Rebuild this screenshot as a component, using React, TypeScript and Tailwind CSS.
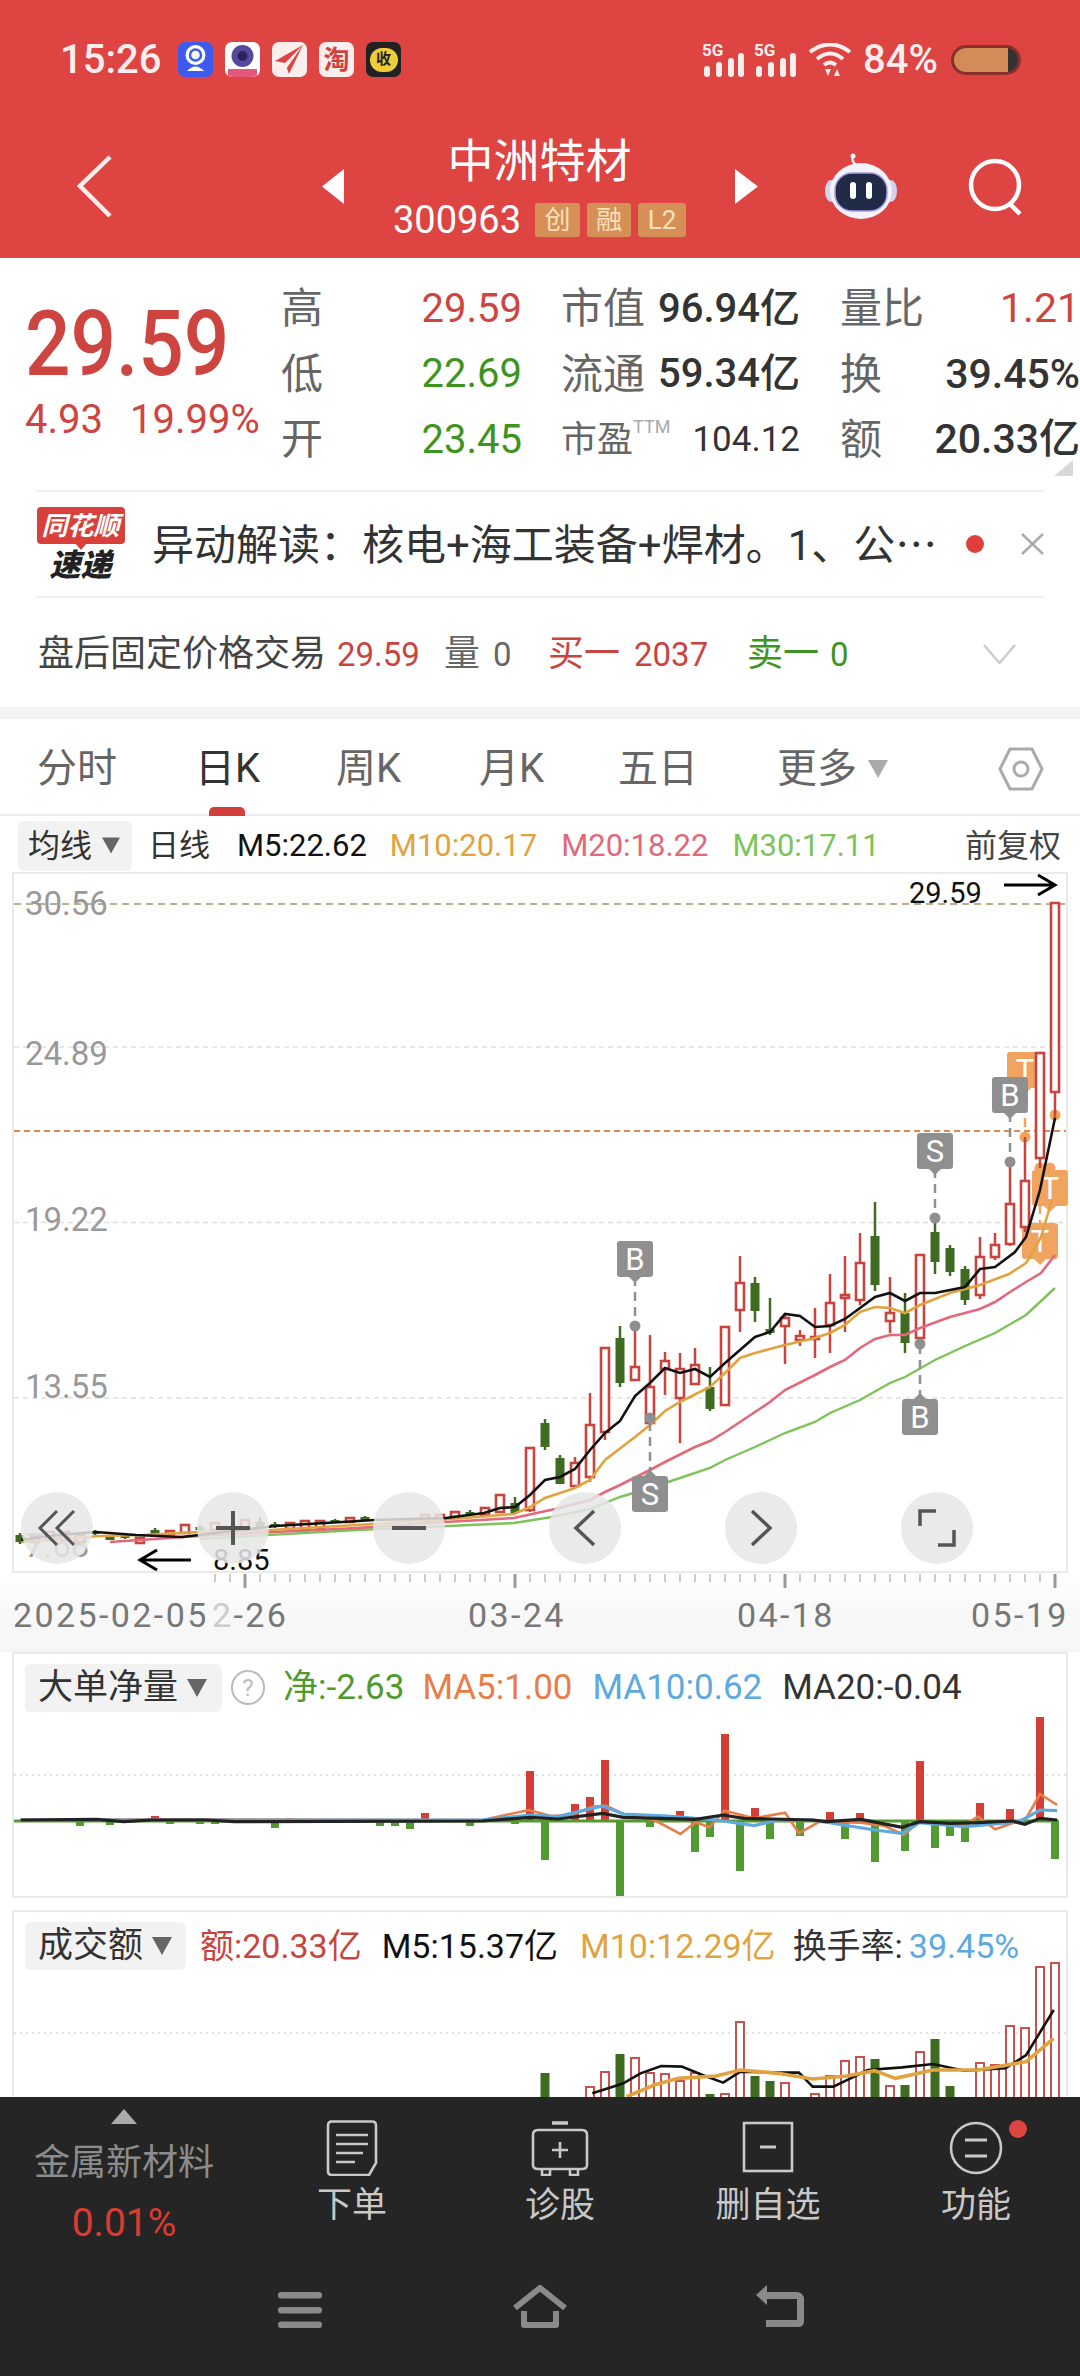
// Stock detail page: quote header, daily K chart and indicator panels
type Candle = [number, number, number, number, number, "r" | "g"];

const RED = "#c9443f";
const DARK_GREEN = "#3f6a22";

// x, high, body top, body bottom, low, colour
const candles: Candle[] = [
  [1055, 903, 903, 1092, 1118, "r"],
  [1040, 1053, 1053, 1158, 1168, "r"],
  [1025, 1137, 1181, 1227, 1232, "r"],
  [1010, 1162, 1204, 1244, 1246, "r"],
  [995, 1233, 1245, 1257, 1260, "r"],
  [980, 1237, 1257, 1295, 1299, "r"],
  [965, 1266, 1269, 1300, 1305, "g"],
  [950, 1245, 1248, 1272, 1276, "g"],
  [935, 1218, 1232, 1262, 1274, "g"],
  [920, 1254, 1255, 1338, 1345, "r"],
  [905, 1293, 1313, 1343, 1353, "g"],
  [890, 1277, 1313, 1321, 1333, "r"],
  [875, 1202, 1236, 1285, 1291, "g"],
  [860, 1233, 1263, 1300, 1305, "r"],
  [845, 1256, 1295, 1298, 1332, "r"],
  [830, 1274, 1303, 1325, 1353, "r"],
  [815, 1308, 1337, 1339, 1358, "r"],
  [800, 1330, 1336, 1340, 1346, "r"],
  [785, 1313, 1318, 1326, 1364, "r"],
  [770, 1298, 1329, 1333, 1335, "g"],
  [755, 1277, 1283, 1311, 1322, "g"],
  [740, 1256, 1283, 1310, 1332, "r"],
  [725, 1327, 1327, 1405, 1405, "r"],
  [710, 1367, 1387, 1409, 1411, "g"],
  [695, 1348, 1365, 1384, 1384, "r"],
  [680, 1353, 1369, 1398, 1443, "r"],
  [665, 1352, 1361, 1369, 1395, "r"],
  [650, 1335, 1387, 1423, 1425, "r"],
  [635, 1326, 1367, 1380, 1380, "r"],
  [620, 1326, 1338, 1383, 1387, "g"],
  [605, 1348, 1348, 1432, 1440, "r"],
  [590, 1393, 1425, 1477, 1482, "r"],
  [575, 1457, 1463, 1486, 1488, "r"],
  [560, 1455, 1458, 1484, 1484, "g"],
  [545, 1419, 1423, 1447, 1450, "g"],
  [530, 1448, 1448, 1510, 1512, "r"],
  [515, 1497, 1503, 1513, 1513, "g"],
  [500, 1495, 1495, 1512, 1512, "r"],
  [485, 1508, 1508, 1515, 1515, "r"],
  [470, 1510, 1512, 1515, 1516, "g"],
  [455, 1512, 1512, 1517, 1517, "r"],
  [440, 1515, 1515, 1520, 1520, "r"],
  [425, 1515, 1515, 1522, 1522, "r"],
  [410, 1517, 1518, 1522, 1524, "g"],
  [365, 1516, 1517, 1520, 1520, "g"],
  [350, 1518, 1518, 1522, 1522, "r"],
  [335, 1519, 1520, 1523, 1523, "g"],
  [320, 1521, 1521, 1528, 1528, "r"],
  [305, 1521, 1521, 1530, 1530, "r"],
  [290, 1523, 1523, 1529, 1529, "r"],
  [275, 1522, 1524, 1526, 1528, "g"],
  [260, 1517, 1522, 1527, 1528, "g"],
  [245, 1520, 1520, 1530, 1530, "r"],
  [215, 1523, 1523, 1530, 1530, "r"],
  [200, 1525, 1527, 1530, 1531, "g"],
  [185, 1525, 1525, 1533, 1533, "r"],
  [170, 1531, 1531, 1534, 1534, "r"],
  [155, 1528, 1530, 1534, 1535, "g"],
  [140, 1538, 1538, 1543, 1543, "r"],
  [125, 1535, 1536, 1538, 1539, "g"],
  [110, 1535, 1536, 1540, 1540, "g"],
  [95, 1530, 1532, 1534, 1535, "g"],
  [80, 1535, 1535, 1542, 1542, "r"],
  [65, 1532, 1532, 1540, 1540, "r"],
  [50, 1532, 1532, 1540, 1540, "r"],
  [35, 1536, 1536, 1542, 1542, "r"],
  [20, 1533, 1535, 1542, 1544, "g"],
];

const m5 = "21,1540 57,1535 96,1532 136,1535 182,1537 275,1526 375,1520 446,1518 484,1513 500,1508 515,1507 530,1495 545,1480 560,1477 575,1469 590,1450 605,1433 620,1421 635,1396 650,1383 665,1368 680,1373 695,1369 710,1377 725,1363 740,1350 755,1337 770,1332 785,1314 800,1316 815,1327 830,1326 845,1319 860,1308 875,1297 890,1293 905,1301 920,1293 935,1293 965,1287 980,1269 995,1267 1015,1252 1026,1237 1040,1190 1055,1118";
const m10 = "21,1542 100,1536 143,1535 200,1532 271,1530 357,1525 464,1518 514,1514 530,1507 545,1498 560,1493 575,1488 590,1480 605,1460 635,1437 650,1425 665,1411 680,1402 710,1387 725,1373 740,1358 755,1353 785,1345 815,1338 830,1333 845,1325 860,1312 875,1307 890,1308 905,1313 920,1305 950,1293 980,1285 1009,1274 1026,1263 1030,1257 1041,1237 1052,1200";
const m20 = "110,1542 214,1535 357,1528 446,1522 514,1518 555,1509 590,1500 605,1492 620,1485 650,1470 665,1462 695,1447 710,1441 725,1432 740,1422 755,1412 770,1402 785,1390 815,1375 830,1367 845,1360 860,1348 875,1339 890,1335 905,1335 920,1328 950,1317 965,1313 980,1309 995,1302 1010,1292 1026,1282 1041,1273 1055,1255";
const m30 = "200,1539 357,1530 514,1523 552,1517 590,1509 620,1497 650,1488 680,1478 710,1468 725,1460 755,1447 785,1433 815,1422 830,1413 860,1400 890,1383 905,1377 935,1360 965,1346 995,1333 1026,1315 1055,1288";

// net flow bars: x, y of the free end (above or below the zero line)
const flowUp = [[1040, 1717], [1010, 1809], [980, 1803], [920, 1761], [860, 1813], [830, 1812], [755, 1808], [725, 1734], [680, 1811], [605, 1760], [590, 1797], [575, 1804], [530, 1771], [500, 1816], [425, 1813], [290, 1818], [155, 1816]];
const flowDown = [[1055, 1859], [965, 1842], [950, 1836], [935, 1848], [905, 1851], [875, 1862], [845, 1839], [800, 1836], [770, 1839], [740, 1871], [710, 1837], [695, 1852], [650, 1827], [620, 1897], [545, 1860], [515, 1824], [470, 1826], [410, 1829], [395, 1826], [380, 1826], [275, 1828], [215, 1824], [200, 1824], [170, 1824], [110, 1825], [80, 1826]];

const toPoints = (pts: number[][]) => pts.map(([x, y]) => `${x / 1.452},${1640 + y / 3}`).join(" ");
const flowBlack = toPoints([[30, 540], [140, 538], [180, 545], [220, 540], [300, 540], [340, 545], [700, 543], [770, 532], [810, 537], [875, 520], [905, 532], [1010, 538], [1050, 525], [1080, 535], [1180, 540], [1200, 545], [1250, 538], [1310, 562], [1335, 545], [1380, 550], [1420, 548], [1470, 543], [1488, 553], [1510, 535], [1535, 540]]);
const flowBlue = toPoints([[30, 540], [700, 540], [770, 525], [810, 530], [875, 498], [905, 522], [970, 528], [1040, 540], [1095, 557], [1130, 540], [1180, 540], [1270, 570], [1310, 580], [1335, 548], [1400, 560], [1480, 545], [1510, 510], [1535, 512]]);
const flowOrange = toPoints([[30, 540], [240, 538], [700, 540], [768, 510], [800, 528], [830, 525], [860, 500], [880, 497], [905, 522], [950, 540], [988, 582], [1010, 547], [1030, 562], [1052, 512], [1095, 535], [1140, 518], [1160, 580], [1190, 545], [1250, 548], [1285, 558], [1312, 585], [1335, 545], [1400, 555], [1420, 530], [1445, 568], [1490, 535], [1510, 462], [1535, 495]]);

// turnover bars: x, top, hollow red or solid green
const turnover: [number, number, "r" | "g"][] = [[1055, 1963, "r"], [1040, 1967, "r"], [1025, 2028, "r"], [1010, 2026, "r"], [995, 2065, "r"], [980, 2063, "r"], [950, 2086, "g"], [935, 2039, "g"], [920, 2052, "r"], [905, 2085, "g"], [890, 2086, "r"], [875, 2059, "g"], [860, 2057, "r"], [845, 2061, "r"], [830, 2076, "r"], [815, 2094, "r"], [785, 2083, "r"], [770, 2081, "g"], [755, 2076, "g"], [740, 2022, "r"], [725, 2094, "r"], [710, 2094, "g"], [695, 2073, "r"], [680, 2081, "r"], [665, 2074, "r"], [650, 2073, "r"], [635, 2058, "r"], [620, 2054, "g"], [605, 2072, "r"], [590, 2087, "r"], [545, 2073, "g"]];
const turnM5 = toLine([[860, 550], [890, 530], [905, 520], [930, 490], [960, 468], [990, 470], [1020, 495], [1050, 518], [1075, 485], [1130, 488], [1160, 488], [1180, 530], [1210, 530], [1260, 480], [1310, 472], [1355, 462], [1400, 482], [1460, 475], [1490, 435], [1530, 300]]);
const turnM10 = toLine([[910, 560], [950, 525], [985, 505], [1040, 498], [1075, 480], [1130, 490], [1180, 507], [1230, 498], [1270, 482], [1300, 505], [1355, 480], [1420, 480], [1490, 455], [1530, 385]]);

function toLine(pts: number[][]) {
  return pts.map(([x, y]) => `${x / 1.452},${1910 + y / 3}`).join(" ");
}

function Tag({ x, y, label, color, dotY, tip = "down" }: { x: number; y: number; label: string; color: string; dotY: number; tip?: "up" | "down" }) {
  const stemFrom = tip === "down" ? y + 36 : y;
  return (
    <g>
      <line x1={x} y1={stemFrom} x2={x} y2={dotY} stroke={color} strokeWidth="2.5" strokeDasharray="9 6" />
      <circle cx={x} cy={dotY} r="5.5" fill={color} />
      <polygon points={tip === "down" ? `${x - 7},${y + 35} ${x + 7},${y + 35} ${x},${y + 42}` : `${x - 7},${y + 1} ${x + 7},${y + 1} ${x},${y - 6}`} fill={color} />
      <rect x={x - 18} y={y} width="36" height="36" rx="3" fill={color} />
      <text x={x} y={y + 29} textAnchor="middle" fontSize="31" fill="#fff">{label}</text>
    </g>
  );
}

function Caret({ className }: { className: string }) {
  return (
    <svg viewBox="0 0 20 18" className={className}>
      <polygon points="0,0 20,0 10,18" fill="currentColor" />
    </svg>
  );
}

function RoundButton({ children }: { children: React.ReactNode }) {
  return (
    <div className="flex h-[72px] w-[72px] items-center justify-center rounded-full bg-[#e6e6e6]/85">
      <svg viewBox="0 0 40 40" className="h-10 w-10" fill="none" stroke="#555" strokeWidth="3">
        {children}
      </svg>
    </div>
  );
}

function KChart() {
  return (
    <div className="relative ml-3 h-[701px] w-[1056px] border-2 border-[#eaeaea]">
      <svg viewBox="14 874 1052 697" className="block h-[697px] w-[1052px] overflow-visible">
        <line x1="14" x2="1066" y1="904" y2="904" stroke="#bcae8c" strokeWidth="2" strokeDasharray="7 5" />
        <line x1="14" x2="1066" y1="1047" y2="1047" stroke="#e0e0e0" strokeWidth="1.5" strokeDasharray="5 4" />
        <line x1="14" x2="1066" y1="1222.5" y2="1222.5" stroke="#e0e0e0" strokeWidth="1.5" strokeDasharray="5 4" />
        <line x1="14" x2="1066" y1="1398" y2="1398" stroke="#e0e0e0" strokeWidth="1.5" strokeDasharray="5 4" />
        <line x1="14" x2="1066" y1="1131" y2="1131" stroke="#dc8a55" strokeWidth="2" strokeDasharray="6 4" />
        <g fontSize="33" fill="#999">
          <text x="25" y="915">30.56</text>
          <text x="25" y="1065">24.89</text>
          <text x="25" y="1231">19.22</text>
          <text x="25" y="1398">13.55</text>
          <text x="25" y="1557">7.68</text>
        </g>
        <Tag x={1025} y={1052} label="T" color="#f0a460" dotY={1137} />
        <Tag x={1050} y={1170} label="T" color="#f0a460" dotY={1168} />
        <Tag x={1040} y={1223} label="T" color="#f0a460" dotY={1168} />
        <circle cx="1055" cy="1115" r="5.5" fill="#f0a460" />
        {candles.map(([x, hi, top, bot, lo, c]) => {
          const color = c === "r" ? RED : DARK_GREEN;
          return (
            <g key={x}>
              <line x1={x} x2={x} y1={hi} y2={lo} stroke={color} strokeWidth="2.5" />
              {c === "r" ? (
                <rect x={x - 4} y={top} width="8" height={bot - top} fill="#fff" stroke={color} strokeWidth="2.6" />
              ) : (
                <rect x={x - 4.5} y={top} width="9" height={bot - top} fill={color} />
              )}
            </g>
          );
        })}
        <polyline points={m30} fill="none" stroke="#7cc45a" strokeWidth="2.4" />
        <polyline points={m20} fill="none" stroke="#e2687a" strokeWidth="2.6" />
        <polyline points={m10} fill="none" stroke="#dfa33f" strokeWidth="2.6" />
        <polyline points={m5} fill="none" stroke="#111" strokeWidth="2.6" />
        <Tag x={635} y={1241} label="B" color="#8f8f8f" dotY={1326} />
        <Tag x={650} y={1476} label="S" color="#8f8f8f" dotY={1418} tip="up" />
        <Tag x={935} y={1133} label="S" color="#8f8f8f" dotY={1218} />
        <Tag x={920} y={1399} label="B" color="#8f8f8f" dotY={1344} tip="up" />
        <Tag x={1010} y={1077} label="B" color="#8f8f8f" dotY={1162} />
        <text x="909" y="903" fontSize="29" fill="#111">29.59</text>
        <g fill="none" stroke="#000" strokeWidth="3">
          <path d="M1004 885H1055M1038 875L1055 885L1038 895" />
          <path d="M191 1560H140M157 1550L140 1560L157 1570" />
        </g>
        <text x="213" y="1570" fontSize="29" fill="#111">8.85</text>
      </svg>
      {/* zoom and pan controls floating over the candles */}
      <div className="absolute bottom-[7px] left-[7px] flex gap-[104px]">
        <RoundButton><path d="M20 3L3 20L20 37M37 3L20 20L37 37" /></RoundButton>
        <RoundButton><path d="M20 3V37M3 20H37" strokeWidth="4" /></RoundButton>
        <RoundButton><path d="M3 20H37" strokeWidth="4" /></RoundButton>
        <RoundButton><path d="M29 3L11 20L29 37" strokeWidth="3.5" /></RoundButton>
        <RoundButton><path d="M11 3L29 20L11 37" strokeWidth="3.5" /></RoundButton>
        <RoundButton><path d="M19 3H3V18M21 37H37V22" strokeWidth="3.5" /></RoundButton>
      </div>
    </div>
  );
}

function DateAxis() {
  const ticks = [];
  for (let x = 215; x <= 1055; x += 15) ticks.push(x);
  return (
    <div className="h-[79px] bg-gradient-to-b from-white via-[#f8f8f8] to-[#f6f6f6]">
      <svg viewBox="0 1573 1080 79" className="block h-[79px] w-[1080px]">
        {ticks.map((x) => {
          const big = x === 245 || x === 515 || x === 785 || x === 1055;
          return <line key={x} x1={x} x2={x} y1="1574" y2={big ? 1588 : 1582} stroke={big ? "#999" : "#ccc"} strokeWidth={big ? 3 : 2} />;
        })}
        <g fontSize="34" fill="#777" letterSpacing="2.4">
          <text x="13" y="1627">2025-02-05</text>
          <text x="212" y="1627"><tspan fill="#ccc">2</tspan>-26</text>
          <text x="468" y="1627">03-24</text>
          <text x="737" y="1627">04-18</text>
          <text x="971" y="1627">05-19</text>
        </g>
      </svg>
    </div>
  );
}

function FlowPanel() {
  return (
    <div className="ml-3 h-[246px] w-[1056px] overflow-hidden border-2 border-[#eaeaea]">
      <div className="flex h-[62px] items-start pt-[10px] text-[35px] leading-[48px]">
        <div className="ml-[11px] flex h-[48px] w-[197px] items-center rounded-[6px] bg-[#f2f2f2] pl-[13px] text-[35px] text-[#333]">
          大单净量
          <Caret className="ml-[9px] h-[18px] w-[20px] text-[#666]" />
        </div>
        <div className="ml-[9px] mt-[6px] flex h-[35px] w-[34px] items-center justify-center rounded-full border-2 border-[#bbb] text-[24px] text-[#bbb]">?</div>
        <span className="ml-[18px] text-[#4e9a2e]">净:-2.63</span>
        <span className="ml-[18px] text-[#e87d4a]">MA5:1.00</span>
        <span className="ml-[20px] text-[#5da9e0]">MA10:0.62</span>
        <span className="ml-[20px] text-[#333]">MA20:-0.04</span>
      </div>
      <svg viewBox="14 1716 1052 180" className="block h-[180px] w-[1052px]">
        <line x1="14" x2="1066" y1="1775" y2="1775" stroke="#e2e2e2" strokeWidth="2" strokeDasharray="2 4" />
        {flowUp.map(([x, y]) => <rect key={x} x={x - 4} y={y} width="8" height={1821 - y} fill="#d43f35" />)}
        {flowDown.map(([x, y]) => <rect key={x} x={x - 4} y="1820" width="8" height={y - 1820} fill="#549a33" />)}
        <line x1="14" x2="1058" y1="1821" y2="1821" stroke="#549a33" strokeWidth="3" />
        <polyline points={flowOrange} fill="none" stroke="#e87d4a" strokeWidth="2.6" />
        <polyline points={flowBlue} fill="none" stroke="#5da9e0" strokeWidth="3.2" />
        <polyline points={flowBlack} fill="none" stroke="#222" strokeWidth="3.2" />
      </svg>
    </div>
  );
}

function TurnoverPanel() {
  return (
    <div className="ml-3 mt-3 h-[187px] w-[1056px] border-x-2 border-t-2 border-[#eaeaea]">
      <div className="relative z-10 flex h-[50px] items-start pt-[10px] text-[34px] leading-[48px]">
        <div className="ml-[11px] flex h-[48px] w-[161px] items-center rounded-[6px] bg-[#f2f2f2] pl-[13px] text-[35px] text-[#333]">
          成交额
          <Caret className="ml-[9px] h-[18px] w-[20px] text-[#666]" />
        </div>
        <span className="ml-[14px] text-[#c9443f]">额:20.33亿</span>
        <span className="ml-[20px] text-[#111]">M5:15.37亿</span>
        <span className="ml-[22px] text-[#dfa33f]">M10:12.29亿</span>
        <span className="ml-[17px] text-[#333]">换手率:</span>
        <span className="ml-[6px] text-[#5da9e0]">39.45%</span>
      </div>
      <svg viewBox="14 1962 1052 135" className="block h-[135px] w-[1052px]">
        <line x1="14" x2="1066" y1="2033" y2="2033" stroke="#e2e2e2" strokeWidth="2" strokeDasharray="2 4" />
        {turnover.map(([x, top, c]) =>
          c === "r" ? (
            <rect key={x} x={x - 4} y={top} width="8" height={2110 - top} fill="#fff" stroke="#c9524d" strokeWidth="2" />
          ) : (
            <rect key={x} x={x - 4.5} y={top} width="9" height={2110 - top} fill={DARK_GREEN} />
          )
        )}
        <polyline points={turnM5} fill="none" stroke="#111" strokeWidth="2.6" />
        <polyline points={turnM10} fill="none" stroke="#dfa33f" strokeWidth="3.6" />
      </svg>
    </div>
  );
}

function Signal() {
  return (
    <div className="relative h-[34px] w-[42px]">
      <span className="absolute left-0 top-[-2px] text-[17px] font-bold leading-[18px]">5G</span>
      <svg viewBox="0 0 42 24" className="absolute bottom-0 left-[2px] h-[24px] w-[42px]" fill="#fdeeee">
        <rect x="0" y="13" width="6" height="11" rx="3" />
        <rect x="12" y="9" width="6" height="15" rx="3" />
        <rect x="24" y="5" width="6" height="19" rx="3" />
        <rect x="34" y="0" width="6" height="24" rx="3" />
      </svg>
    </div>
  );
}

function StatusBar() {
  return (
    <div className="ml-[60px] mt-[42px] flex h-[35px] items-center text-[#fdeeee]">
      <span className="w-[118px] text-[40px] font-medium leading-none">15:26</span>
      <div className="flex gap-[12px]">
        <div className="h-[35px] w-[35px] rounded-[7px] bg-[#3d5bf0]">
          <svg viewBox="0 0 35 35" className="h-full w-full" fill="none">
            <circle cx="17.5" cy="13" r="10" fill="#fff" />
            <circle cx="17.5" cy="13" r="5.5" stroke="#3d5bf0" strokeWidth="2.5" />
            <path d="M9 29Q17.5 20 26 29Z" fill="#fff" />
          </svg>
        </div>
        <div className="relative h-[35px] w-[35px] overflow-hidden rounded-[7px] bg-white">
          <svg viewBox="0 0 35 35" className="h-full w-full">
            <circle cx="17.5" cy="14" r="11" fill="#57489c" />
            <circle cx="17.5" cy="14" r="5" fill="#2a2360" />
            <rect x="3" y="27" width="29" height="8" fill="#e6577a" />
          </svg>
        </div>
        <div className="h-[35px] w-[35px] rounded-[7px] bg-[#fdeeee]">
          <svg viewBox="0 0 35 35" className="h-full w-full">
            <path d="M31 3L3 19L13 21L17 32Z" fill="#dd4442" />
            <path d="M31 3L13 21L14 27Z" fill="#fdeeee" />
          </svg>
        </div>
        <div className="flex h-[35px] w-[35px] items-center justify-center rounded-[7px] bg-[#fdeeee] text-[26px] font-bold leading-none text-[#d2403c]">淘</div>
        <div className="flex h-[35px] w-[35px] items-center justify-center rounded-[7px] bg-[#222]">
          <div className="flex h-[24px] w-[28px] items-center justify-center rounded-[12px] bg-[#f0cb3c] text-[15px] font-bold leading-none text-[#222]">收</div>
        </div>
      </div>
      <div className="ml-[301px] flex gap-[10px]">
        <Signal />
        <Signal />
      </div>
      <svg viewBox="0 0 44 34" className="ml-[12px] h-[34px] w-[44px]" fill="none" stroke="#fdeeee" strokeWidth="4">
        <path d="M2 9Q22 -6 42 9M9 16Q22 5 35 16M16 22Q22 17 28 22" />
        <path d="M17 26H23L20 33ZM26 33H32L29 26Z" fill="#fdeeee" stroke="none" />
      </svg>
      <span className="ml-[11px] text-[40px] font-medium leading-none">84%</span>
      <div className="ml-[13px] flex h-[30px] w-[70px] overflow-hidden rounded-[15px] border-[3px] border-[#8a2f2b] bg-[#333]">
        <div className="h-full w-[54px] bg-[#d58b58]" />
      </div>
    </div>
  );
}

function TitleRow() {
  return (
    <div className="mt-[58px] flex h-[103px] items-center">
      <svg viewBox="0 0 35 63" className="ml-[77px] h-[63px] w-[35px]" fill="none" stroke="#fdeeee" strokeWidth="4.5">
        <path d="M33 2L3 31L33 61" />
      </svg>
      <svg viewBox="0 0 22 35" className="ml-[210px] h-[35px] w-[22px]" fill="#fff"><polygon points="22,0 22,35 0,17.5" /></svg>
      <div className="flex w-[391px] flex-col items-center text-white">
        <div className="text-[46px] leading-[52px]">中洲特材</div>
        <div className="mt-[15px] flex h-[36px] items-center text-[38px] leading-none">
          300963
          <div className="ml-[14px] flex gap-[7px] text-[26px] text-[#fbe0bc]">
            <span className="flex h-[34px] w-[45px] items-center justify-center rounded-[3px] bg-[#d68f56]">创</span>
            <span className="flex h-[34px] w-[44px] items-center justify-center rounded-[3px] bg-[#d68f56]">融</span>
            <span className="flex h-[34px] w-[48px] items-center justify-center rounded-[3px] bg-[#d68f56]">L2</span>
          </div>
        </div>
      </div>
      <svg viewBox="0 0 23 35" className="h-[35px] w-[23px]" fill="#fff"><polygon points="0,0 0,35 23,17.5" /></svg>
      <svg viewBox="0 0 72 67" className="ml-[67px] h-[67px] w-[72px]">
        <path d="M31 12Q26 8 28 3" stroke="#e8e8f8" strokeWidth="2.5" fill="none" />
        <circle cx="28" cy="3" r="2.5" fill="#f4f4fc" />
        <ellipse cx="6" cy="38" rx="6" ry="11" fill="#cfd3ee" />
        <ellipse cx="66" cy="38" rx="6" ry="11" fill="#cfd3ee" />
        <ellipse cx="36" cy="38" rx="31" ry="28" fill="#f2f3fc" />
        <rect x="10" y="20" width="52" height="38" rx="17" fill="#1f2b47" stroke="#a79be8" strokeWidth="1.5" />
        <rect x="25" y="29" width="6" height="17" rx="3" fill="#fff" />
        <rect x="41" y="29" width="6" height="17" rx="3" fill="#fff" />
      </svg>
      <svg viewBox="0 0 58 58" className="ml-[71px] h-[58px] w-[58px]" fill="none" stroke="#fff" strokeWidth="4.5">
        <circle cx="27" cy="27" r="24" />
        <path d="M41 45L52 56" />
      </svg>
    </div>
  );
}

function QuoteRow({ label, value, tone, mid, midValue, midValueClass, right, rightValue, rightTone }: { label: string; value: string; tone: string; mid: React.ReactNode; midValue: string; midValueClass: string; right: string; rightValue: string; rightTone: string }) {
  return (
    <div className="flex h-[65.5px] items-center whitespace-nowrap">
      <span className="w-[60px] text-[42px] text-[#666]">{label}</span>
      <span className={`w-[181px] text-right text-[40px] ${tone}`}>{value}</span>
      <div className="ml-[39px] flex w-[239px] items-center justify-between">
        {mid}
        <span className={midValueClass}>{midValue}</span>
      </div>
      <div className="ml-[40px] flex w-[240px] items-center justify-between">
        <span className="text-[42px] text-[#666]">{right}</span>
        <span className={`text-[41px] ${rightTone}`}>{rightValue}</span>
      </div>
    </div>
  );
}

function Quote() {
  const midLabel = "text-[42px] text-[#666]";
  const midBig = "text-[40px] font-medium text-[#333]";
  return (
    <section className="h-[449px]">
      <div className="relative flex h-[232px] pl-[25px] pt-[18px]">
        <div className="w-[256px] whitespace-nowrap pt-[24px]">
          <div className="origin-left scale-x-[0.89] text-[90px] font-medium leading-[90px] text-[#ce4440]">29.59</div>
          <div className="mt-[10px] flex whitespace-nowrap text-[40px] leading-[40px] text-[#ce4440]">
            <span>4.93</span>
            <span className="ml-[27px]">19.99%</span>
          </div>
        </div>
        <div>
          <QuoteRow label="高" value="29.59" tone="text-[#ce4440]" mid={<span className={midLabel}>市值</span>} midValue="96.94亿" midValueClass={midBig} right="量比" rightValue="1.21" rightTone="text-[#ce4440]" />
          <QuoteRow label="低" value="22.69" tone="text-[#3e9420]" mid={<span className={midLabel}>流通</span>} midValue="59.34亿" midValueClass={midBig} right="换" rightValue="39.45%" rightTone="font-medium text-[#333]" />
          <QuoteRow
            label="开"
            value="23.45"
            tone="text-[#3e9420]"
            mid={
              <span className="flex items-start text-[36px] text-[#666]">
                市盈<span className="mt-[5px] text-[18px] leading-[18px] text-[#aaa]">TTM</span>
              </span>
            }
            midValue="104.12"
            midValueClass="text-[35px] text-[#333]"
            right="额"
            rightValue="20.33亿"
            rightTone="font-medium text-[#333]"
          />
        </div>
        <svg viewBox="0 0 19 16" className="absolute right-[7px] top-[202px] h-[16px] w-[19px]" fill="#d8d8d8">
          <polygon points="19,0 19,16 0,16" />
        </svg>
      </div>

      <div className="mx-9 flex h-[108px] items-center whitespace-nowrap border-y-2 border-[#f0f0f0]">
        <div className="flex w-[89px] flex-col items-center">
          <div className="relative flex h-[37px] w-[88px] items-center justify-center rounded-[4px] bg-[#d9403c] text-[26px] font-bold italic leading-none text-white">
            同花顺
            <div className="absolute bottom-[-6px] left-[38px] h-0 w-0 border-x-[6px] border-t-[7px] border-x-transparent border-t-[#d9403c]" />
          </div>
          <div className="mt-[6px] text-[31px] font-black italic leading-[31px] text-[#222]">速递</div>
        </div>
        <span className="ml-[27px] w-[785px] text-[42px] leading-none text-[#333]">
          异动解读：核电+海工装备+焊材。1、公<span className="font-['Noto_Sans_CJK_SC'] tracking-[-0.2em]">…</span>
        </span>
        <div className="ml-[29px] h-[18px] w-[18px] rounded-full bg-[#e0403c]" />
        <svg viewBox="0 0 23 22" className="ml-[37px] h-[22px] w-[23px]" fill="none" stroke="#aaa" strokeWidth="2.5">
          <path d="M1 1L22 21M22 1L1 21" />
        </svg>
      </div>

      <div className="flex h-[107px] items-center whitespace-nowrap pl-[38px] pt-[5px] text-[36px] leading-none">
        <span className="w-[299px] text-[#444]">盘后固定价格交易</span>
        <span className="w-[107px] text-[33px] text-[#c9443f]">29.59</span>
        <span className="text-[#666]">量</span>
        <span className="ml-[13px] w-[55px] text-[33px] text-[#666]">0</span>
        <span className="text-[#c9443f]">买一</span>
        <span className="ml-[14px] w-[113px] text-[33px] text-[#c9443f]">2037</span>
        <span className="text-[#3e9420]">卖一</span>
        <span className="ml-[11px] w-[153px] text-[33px] text-[#3e9420]">0</span>
        <svg viewBox="0 0 33 20" className="h-[20px] w-[33px]" fill="none" stroke="#ccc" strokeWidth="2.5">
          <path d="M1 1L16.5 19L32 1" />
        </svg>
      </div>
    </section>
  );
}

function Tabs() {
  return (
    <>
      <div className="h-3 bg-[#f3f3f3]" />
      <nav className="flex h-[97px] items-center border-b-2 border-[#ececec] pl-[37px] pt-[4px] text-[40px] leading-none text-[#666]">
        <span className="w-[158px]">分时</span>
        <span className="relative w-[141px] text-[#333]">
          日K
          <span className="absolute bottom-[-27px] left-[14px] h-[9px] w-[36px] rounded-t-[5px] bg-[#d2403c]" />
        </span>
        <span className="w-[143px]">周K</span>
        <span className="w-[139px]">月K</span>
        <span className="w-[159px]">五日</span>
        <span>更多</span>
        <Caret className="ml-[10px] h-[18px] w-[22px] text-[#aaa]" />
        <svg viewBox="0 0 46 46" className="ml-[109px] h-[46px] w-[46px]" fill="none" stroke="#aaa" strokeWidth="3">
          <path d="M12 3H34L44 23L34 43H12L2 23Z" strokeLinejoin="round" />
          <circle cx="23" cy="23" r="7" />
        </svg>
      </nav>
    </>
  );
}

function MaBar() {
  return (
    <div className="flex h-[56px] items-center whitespace-nowrap pt-[3px] text-[31px] leading-none">
      <div className="ml-[18px] flex h-[50px] w-[114px] items-center rounded-[6px] bg-[#f2f2f2] pl-[10px] text-[32px] text-[#333]">
        均线
        <Caret className="ml-[10px] h-[17px] w-[18px] text-[#666]" />
      </div>
      <span className="ml-[16px] text-[#333]">日线</span>
      <span className="ml-[27px] text-[#111]">M5:22.62</span>
      <span className="ml-[23px] text-[#dfa33f]">M10:20.17</span>
      <span className="ml-[24px] text-[#e2687a]">M20:18.22</span>
      <span className="ml-[24px] text-[#7cc45a]">M30:17.11</span>
      <span className="ml-auto mr-[19px] text-[32px] text-[#444]">前复权</span>
    </div>
  );
}

function FooterItem({ label, children, dot }: { label: string; children: React.ReactNode; dot?: boolean }) {
  return (
    <div className="relative flex flex-col items-center">
      <svg viewBox="0 0 60 56" className="h-[56px] w-[60px]" fill="none" stroke="#c8c8c8" strokeWidth="2.6">
        {children}
      </svg>
      {dot && <div className="absolute left-[137px] top-0 h-[18px] w-[18px] rounded-full bg-[#dd4442]" />}
      <span className="mt-[12px] text-[35px] leading-[36px] text-[#c8c8c8]">{label}</span>
    </div>
  );
}

function Footer() {
  return (
    <footer className="h-[279px] bg-[#252525]">
      <div className="flex h-[173px]">
        <div className="flex w-[248px] flex-col items-center whitespace-nowrap">
          <svg viewBox="0 0 26 15" className="mt-[12px] h-[15px] w-[26px]" fill="#aaa"><polygon points="13,0 26,15 0,15" /></svg>
          <span className="mt-[19px] text-[36px] leading-[40px] text-[#8c8c8c]">金属新材料</span>
          <span className="mt-[20px] text-[39px] leading-[40px] text-[#db3b30]">0.01%</span>
        </div>
        <div className="grid flex-1 grid-cols-4 pt-[23px]">
          <FooterItem label="下单">
            <path d="M8 1.5H50Q54 1.5 54 5.5V43L47 55H10Q6 55 6 51V5.5Q6 1.5 10 1.5Z" />
            <path d="M14 15H46M14 24H46M14 33H41M14 42H33" />
          </FooterItem>
          <FooterItem label="诊股">
            <path d="M22 3H38" strokeWidth="3.5" />
            <path d="M8 10H52Q57 10 57 15V45Q57 49 52 49H8Q3 49 3 45V15Q3 10 8 10Z" />
            <path d="M30 22V38M22 30H38M12 49V55H20V49M40 49V55H48V49" />
          </FooterItem>
          <FooterItem label="删自选">
            <rect x="6" y="3" width="48" height="48" />
            <path d="M22 27H38" strokeWidth="3" />
          </FooterItem>
          <FooterItem label="功能" dot>
            <circle cx="30" cy="28" r="25" />
            <path d="M19 20H41M19 36H41" strokeWidth="3" />
          </FooterItem>
        </div>
      </div>
      <div className="flex h-[106px] items-start pt-[15px] pl-[278px]">
        <svg viewBox="0 0 44 36" className="mt-[7px] h-[36px] w-[44px]" fill="#8a8a8a">
          <rect width="44" height="6.5" rx="3" />
          <rect y="15" width="44" height="6.5" rx="3" />
          <rect y="29.5" width="44" height="6.5" rx="3" />
        </svg>
        <svg viewBox="0 0 56 44" className="ml-[190px] h-[44px] w-[56px]" fill="none" stroke="#8a8a8a" strokeWidth="6" strokeLinejoin="round">
          <path d="M3 23L28 3L53 23" />
          <path d="M12 26V40H44V26" />
        </svg>
        <svg viewBox="0 0 48 42" className="ml-[188px] h-[42px] w-[48px]" fill="#8a8a8a">
          <path d="M0 10L11 0V7H40Q48 7 48 15V36Q48 42 42 42H10V35H41V14H11V20Z" />
        </svg>
      </div>
    </footer>
  );
}

export default function App() {
  return (
    <div className="relative flex h-[2376px] w-[1080px] flex-col overflow-hidden bg-white font-['Roboto','Noto_Sans_CJK_SC',sans-serif]">
      <header className="h-[258px] bg-[#dd4442]">
        <StatusBar />
        <TitleRow />
      </header>
      <Quote />
      <Tabs />
      <MaBar />
      <KChart />
      <DateAxis />
      <FlowPanel />
      <TurnoverPanel />
      <Footer />
    </div>
  );
}
